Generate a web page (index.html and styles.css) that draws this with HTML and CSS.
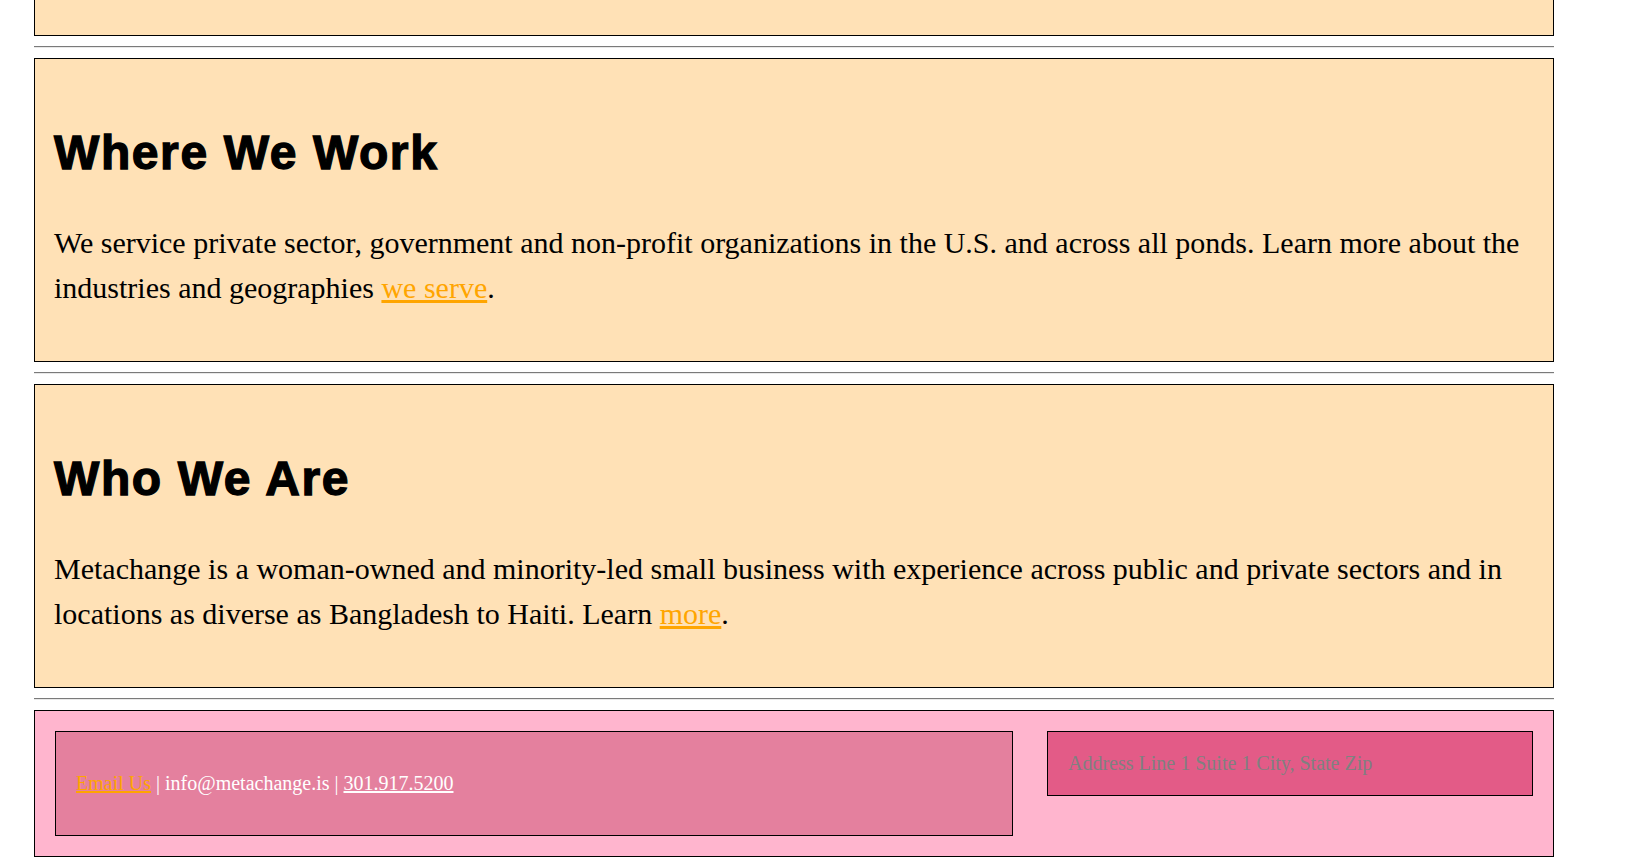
FILE: index.html
```html
<!DOCTYPE html>
<html lang="en">
<head>
<meta charset="utf-8">
<title>Metachange</title>
<link rel="stylesheet" href="styles.css">
</head>
<body>
<div class="page">
  <section class="panel panel-cut"></section>
  <hr class="divider">
  <section class="panel">
    <h2 class="panel-title">Where We Work</h2>
    <p class="panel-text">We service private sector, government and non-profit organizations in the U.S. and across all ponds. Learn more about the industries and geographies <a href="#" class="link">we serve</a>.</p>
  </section>
  <hr class="divider">
  <section class="panel">
    <h2 class="panel-title">Who We Are</h2>
    <p class="panel-text">Metachange is a woman-owned and minority-led small business with experience across public and private sectors and in locations as diverse as Bangladesh to Haiti. Learn <a href="#" class="link">more</a>.</p>
  </section>
  <hr class="divider">
  <footer class="footer">
    <div class="contact">
      <p class="contact-line"><a href="#" class="link">Email Us</a> | info@metachange.is | <a href="#" class="phone">301.917.5200</a></p>
    </div>
    <div class="address">Address Line 1 Suite 1 City, State Zip</div>
  </footer>
</div>
</body>
</html>
```

FILE: styles.css
```css
html, body {
  margin: 0;
  padding: 0;
  background: #ffffff;
}

body {
  font-family: "Liberation Serif", "Times New Roman", serif;
  color: #000;
}

.page {
  width: 1520px;
  margin-left: 34px;
}

.panel {
  background: #ffe1b6;
  border: 1px solid #000;
  padding: 66px 19px 51px;
}

.panel-cut {
  border-top: none;
  padding: 0;
  height: 35px;
}

.panel-title {
  font-family: "Liberation Sans", Arial, sans-serif;
  font-weight: 700;
  font-size: 48px;
  line-height: 56px;
  letter-spacing: 1.6px;
  -webkit-text-stroke: 1.3px #000;
  margin: 0 0 39px;
}

.panel-text {
  font-size: 30px;
  line-height: 45px;
  margin: 0;
}

.link {
  color: #ffa500;
}

.divider {
  margin: 10px 0;
  border: 0;
  border-top: 1px solid #7a7a7a;
  border-bottom: 1px solid #e8e8e8;
  height: 0;
}

.footer {
  background: #ffb5ce;
  border: 1px solid #000;
  padding: 20px;
  display: grid;
  grid-template-columns: 958px 1fr;
  column-gap: 34px;
  align-items: start;
  font-size: 20px;
}

.contact {
  background: #e4809e;
  border: 1px solid #000;
  padding: 20px;
  color: #fff;
}

.contact-line {
  margin: 20px 0;
  line-height: 23px;
}

.phone {
  color: #fff;
}

.address {
  background: #e35b87;
  border: 1px solid #000;
  padding: 20px;
  line-height: 23px;
  color: #808080;
}
```
